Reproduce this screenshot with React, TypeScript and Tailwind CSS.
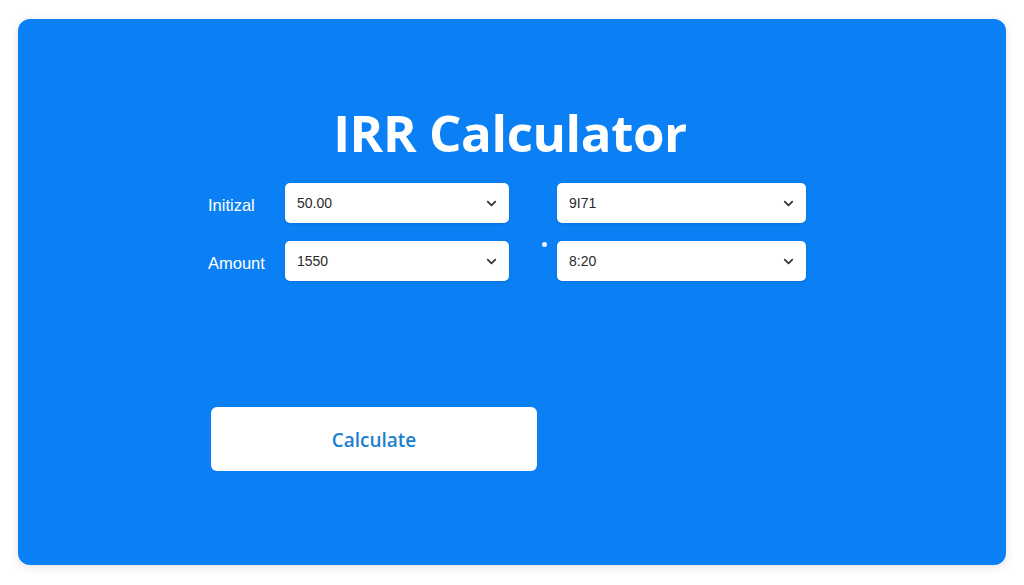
import { ChevronDown } from 'lucide-react'

type Field = { value: string; width: string }

function SelectBox({ value, width }: Field) {
  return (
    <div
      className={`${width} h-[40px] bg-white rounded-[5px] flex items-center justify-between pl-[12px] pr-[10px] shadow-sm`}
    >
      <span className="text-[14px] text-[#2a2a2a] font-['Liberation_Sans',sans-serif]">{value}</span>
      <ChevronDown size={15} strokeWidth={3} className="text-[#3a3a3a]" />
    </div>
  )
}

export default function App() {
  const rows = [
    { label: 'Initizal', left: '50.00', right: '9I71', dot: false },
    { label: 'Amount', left: '1550', right: '8:20', dot: true },
  ]

  return (
    <div className="w-[1024px] h-[585px] bg-white pt-[19px] pl-[18px] font-['Open_Sans',sans-serif]">
      <div className="w-[988px] h-[546px] bg-[#0a80f4] rounded-[12px] shadow-[0_2px_10px_rgba(0,0,0,0.12)] flex flex-col items-center pt-[81px]">
        <h1 className="text-[51px] leading-[64px] font-bold text-white tracking-[-0.4px] -ml-[4px]">IRR Calculator</h1>

        <div className="self-start ml-[190px] mt-[19px] flex flex-col gap-[18px]">
          {rows.map((r) => (
            <div key={r.label} className="flex items-center">
              <span className="w-[77px] pt-[5px] text-[16.5px] text-white font-['Liberation_Sans',sans-serif]">{r.label}</span>
              <SelectBox value={r.left} width="w-[224px]" />
              <div className="w-[48px] h-[40px] flex items-start justify-end pr-[10px]">
                {r.dot && <span className="mt-[1px] w-[5px] h-[5px] rounded-full bg-white/90" />}
              </div>
              <SelectBox value={r.right} width="w-[249px]" />
            </div>
          ))}
        </div>

        <button className="self-start ml-[193px] mt-[126px] w-[326px] h-[64px] bg-white rounded-[6px] pt-[3px] text-[19px] font-semibold text-[#1b7fcf]">
          Calculate
        </button>
      </div>
    </div>
  )
}
